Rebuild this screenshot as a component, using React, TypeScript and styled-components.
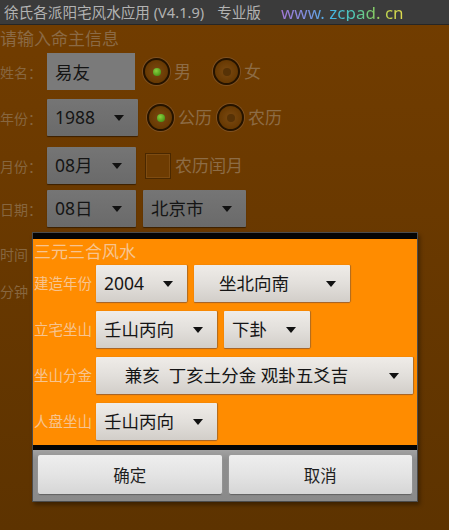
import React from 'react';
import styled, { createGlobalStyle } from 'styled-components';

const GlobalStyle = createGlobalStyle`
  html, body {
    margin: 0;
    padding: 0;
    background: #5e3400;
  }
  * {
    box-sizing: border-box;
  }
`;

const FONT = `"Noto Sans", "Noto Sans CJK SC", sans-serif`;
const CJK_FONT = `"Noto Sans CJK SC", sans-serif`;

export default function App() {
  return (
    <Screen>
      <GlobalStyle />
      <TitleBar>
        <AppTitle>徐氏各派阳宅风水应用 (V4.1.9)</AppTitle>
        <Edition>专业版</Edition>
        <SiteLink>www. zcpad. cn</SiteLink>
      </TitleBar>

      <Form>
        <Heading>请输入命主信息</Heading>

        <Row top={3}>
          <FieldLabel>姓名：</FieldLabel>
          <NameInput>易友</NameInput>
          <Radio checked gapLeft={8} />
          <OptionText>男</OptionText>
          <Radio gapLeft={22} />
          <OptionText>女</OptionText>
        </Row>

        <Row top={9}>
          <FieldLabel>年份：</FieldLabel>
          <Spinner dim width={91} value="1988" />
          <Radio checked gapLeft={9} />
          <OptionText>公历</OptionText>
          <Radio gapLeft={5} />
          <OptionText>农历</OptionText>
        </Row>

        <Row top={11}>
          <FieldLabel>月份：</FieldLabel>
          <Spinner dim width={89} value="08月" />
          <CheckBox />
          <OptionText>农历闰月</OptionText>
        </Row>

        <Row top={6}>
          <FieldLabel>日期：</FieldLabel>
          <Spinner dim width={89} value="08日" />
          <Gap w={7} />
          <Spinner dim width={103} value="北京市" />
        </Row>

        {/* these rows sit mostly under the dialog, only the label start shows */}
        <Row top={8}>
          <FieldLabel>时间</FieldLabel>
        </Row>
        <Row top={0}>
          <FieldLabel>分钟</FieldLabel>
        </Row>
      </Form>

      <Dialog>
        <DialogTopBand />
        <DialogBody>
          <DialogTitle>三元三合风水</DialogTitle>
          <DialogRow>
            <DialogLabel>建造年份</DialogLabel>
            <Spinner width={91} value="2004" />
            <Gap w={7} />
            <Spinner width={156} value="坐北向南" centered />
          </DialogRow>
          <DialogRow>
            <DialogLabel>立宅坐山</DialogLabel>
            <Spinner width={121} value="壬山丙向" />
            <Gap w={7} />
            <Spinner width={86} value="下卦" />
          </DialogRow>
          <DialogRow>
            <DialogLabel>坐山分金</DialogLabel>
            <Spinner width={317} value={'兼亥\u00a0\u00a0丁亥土分金 观卦五爻吉'} centered />
          </DialogRow>
          <DialogRow>
            <DialogLabel>人盘坐山</DialogLabel>
            <Spinner width={121} value="壬山丙向" />
          </DialogRow>
        </DialogBody>
        <DialogBottomBand />
        <ButtonBar>
          <DialogButton>确定</DialogButton>
          <DialogButton>取消</DialogButton>
        </ButtonBar>
      </Dialog>
    </Screen>
  );
}

function Spinner({ value, width, dim, centered }: { value: string; width: number; dim?: boolean; centered?: boolean }) {
  return (
    <SpinnerBox w={width} dim={dim} centered={centered}>
      <SpinnerText centered={centered}>{value}</SpinnerText>
      <Arrow />
    </SpinnerBox>
  );
}

const Screen = styled.div`
  position: relative;
  width: 449px;
  height: 530px;
  overflow: hidden;
  font-family: ${FONT};
  background: linear-gradient(to bottom, #723d00 0%, #6a3900 40%, #5d3300 100%);
`;

const TitleBar = styled.div`
  height: 25px;
  display: flex;
  align-items: center;
  padding-left: 4px;
  background: #3b3b3b;
  border-bottom: 1px solid #262626;
`;

const AppTitle = styled.span`
  font-size: 14.6px;
  line-height: 1;
  color: #b2b2b2;
  white-space: nowrap;
`;

const Edition = styled(AppTitle)`
  margin-left: 13px;
`;

const SiteLink = styled.span`
  margin-left: 20px;
  font-size: 17px;
  line-height: 1;
  white-space: nowrap;
  background: linear-gradient(to right, #a478d6 0%, #7d90e0 22%, #44b4e4 40%, #4ec8b8 58%, #7ccc6c 74%, #c8d44c 88%, #e0dc50 100%);
  -webkit-background-clip: text;
  background-clip: text;
  color: transparent;
`;

const Form = styled.div`
  display: flex;
  flex-direction: column;
`;

const Heading = styled.div`
  height: 22px;
  margin-top: 3px;
  font-size: 17px;
  line-height: 22px;
  color: #8b6a45;
`;

const Row = styled.div<{ top: number }>`
  display: flex;
  align-items: center;
  height: 37px;
  margin-top: ${(p) => p.top}px;
`;

const FieldLabel = styled.div`
  width: 47px;
  flex-shrink: 0;
  font-family: ${CJK_FONT};
  font-size: 14px;
  line-height: 1;
  color: #87663f;
  white-space: nowrap;
`;

const NameInput = styled.div`
  width: 88px;
  height: 37px;
  display: flex;
  align-items: center;
  padding-left: 8px;
  font-size: 17.5px;
  color: #141414;
  background: #7a7a7a;
`;

const Radio = styled.div<{ checked?: boolean; gapLeft: number }>`
  position: relative;
  width: 27px;
  height: 27px;
  margin-left: ${(p) => p.gapLeft}px;
  flex-shrink: 0;
  border-radius: 50%;
  border: 2px solid #241300;
  box-shadow: 0 0 0 1px #7e5020;
  background: radial-gradient(circle, #7a4a12 0%, #6a3b04 60%, #5a3200 100%);
  &::after {
    content: '';
    position: absolute;
    left: 50%;
    top: 50%;
    width: 8px;
    height: 8px;
    margin: -4px 0 0 -4px;
    border-radius: 50%;
    background: ${(p) => (p.checked ? 'radial-gradient(circle at 40% 35%, #8ad040 0%, #4e9818 70%)' : '#573206')};
  }
`;

const OptionText = styled.span`
  margin-left: 4px;
  font-size: 17px;
  line-height: 1;
  color: #8d6c46;
  white-space: nowrap;
`;

const CheckBox = styled.div`
  width: 26px;
  height: 26px;
  margin-left: 9px;
  flex-shrink: 0;
  border: 1px solid #4a2800;
  background: #6e3c02;
  box-shadow: inset 0 0 0 1px #7e4c12;
`;

const Gap = styled.div<{ w: number }>`
  width: ${(p) => p.w}px;
  flex-shrink: 0;
`;

const SpinnerBox = styled.div<{ w: number; dim?: boolean; centered?: boolean }>`
  width: ${(p) => p.w}px;
  height: 37px;
  flex-shrink: 0;
  display: flex;
  align-items: center;
  padding: ${(p) => (p.centered ? '0 14px 0 0' : '0 14px 0 8px')};
  border-radius: 1px;
  color: #151515;
  background: ${(p) =>
    p.dim
      ? 'linear-gradient(to bottom, #757575 0%, #6a6a6a 100%)'
      : 'linear-gradient(to bottom, #efece8 0%, #e2dfdb 50%, #d2cec9 100%)'};
  box-shadow: ${(p) => (p.dim ? '0 1px 1px #3a2000' : '0 1px 1px #a0622a, 1px 0 1px #b06c20')};
`;

const SpinnerText = styled.span<{ centered?: boolean }>`
  flex: 1;
  text-align: ${(p) => (p.centered ? 'center' : 'left')};
  font-size: 17.5px;
  line-height: 1;
  white-space: nowrap;
`;

const Arrow = styled.span`
  width: 0;
  height: 0;
  margin-left: 12px;
  flex-shrink: 0;
  border-left: 5px solid transparent;
  border-right: 5px solid transparent;
  border-top: 6px solid #111;
`;

const Dialog = styled.div`
  position: absolute;
  left: 32px;
  top: 232px;
  width: 386px;
  height: 270px;
  display: flex;
  flex-direction: column;
  border: 1px solid #4c4c4c;
  box-shadow: 2px 3px 4px rgba(0, 0, 0, 0.35);
`;

const DialogTopBand = styled.div`
  height: 6px;
  background: #050505;
`;

const DialogBody = styled.div`
  height: 206px;
  display: flex;
  flex-direction: column;
  gap: 9px;
  padding: 3px 0 0 1px;
  background: #ff8c00;
`;

const DialogTitle = styled.div`
  height: 20px;
  margin-bottom: -6px;
  font-size: 17px;
  line-height: 20px;
  color: #f7c490;
`;

const DialogRow = styled.div`
  display: flex;
  align-items: center;
  height: 37px;
`;

const DialogLabel = styled.div`
  width: 62px;
  flex-shrink: 0;
  font-size: 14.5px;
  line-height: 1;
  color: #f7c490;
  white-space: nowrap;
`;

const DialogBottomBand = styled.div`
  height: 5px;
  background: #050505;
`;

const ButtonBar = styled.div`
  flex: 1;
  display: flex;
  gap: 7px;
  padding: 5px 5px 7px;
  background: linear-gradient(to bottom, #a2a2a2 0%, #8e8e8e 20%, #8a8a8a 100%);
`;

const DialogButton = styled.div`
  flex: 1;
  display: flex;
  align-items: center;
  justify-content: center;
  border-radius: 2px;
  font-size: 16.5px;
  color: #1e1e1e;
  background: linear-gradient(to bottom, #eeeeee 0%, #e4e4e4 50%, #d6d6d6 100%);
  box-shadow: 0 1px 1px #606060, 0 0 0 1px #9a9a9a;
`;
